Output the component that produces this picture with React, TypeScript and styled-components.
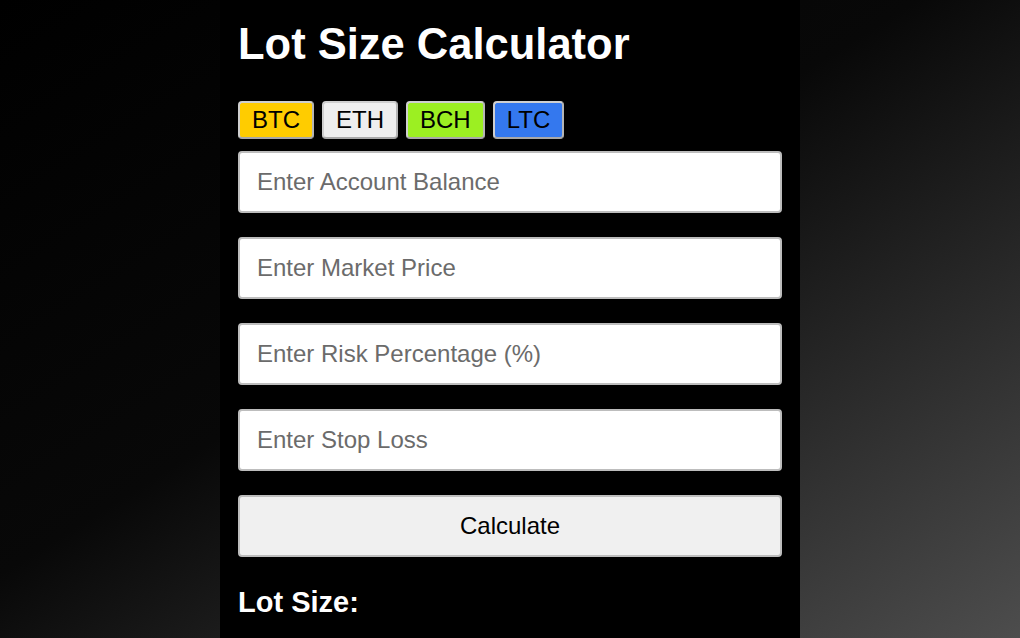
import React from 'react'
import styled, { createGlobalStyle } from 'styled-components'

const Global = createGlobalStyle`
  * {
    margin: 0;
    padding: 0;
    box-sizing: border-box;
  }

  html, body, #root {
    height: 100%;
  }

  body {
    font-family: 'Liberation Sans', Arial, sans-serif;
    background: linear-gradient(to bottom right, #000 0%, #080808 45%, #4d4d4d 100%);
    overflow: hidden;
  }
`

const Page = styled.div`
  display: flex;
  justify-content: center;
  height: 100%;
`

const Panel = styled.main`
  width: 580px;
  height: 100%;
  padding: 19px 18px 0;
  background: #000;
  display: flex;
  flex-direction: column;
`

const Title = styled.h1`
  font-size: 43.5px;
  font-weight: 700;
  line-height: 50px;
  color: #fff;
`

const Coins = styled.div`
  display: flex;
  gap: 8px;
  margin-top: 32px;
`

const Coin = styled.button<{ $bg: string }>`
  height: 38px;
  padding: 0 12px;
  font-family: inherit;
  font-size: 24px;
  color: #000;
  background: ${p => p.$bg};
  border: 2px solid #cfcfcf;
  border-bottom-color: #a8a8a8;
  border-right-color: #b5b5b5;
  border-radius: 4px;
`

const Fields = styled.div`
  display: flex;
  flex-direction: column;
  gap: 24px;
  margin-top: 12px;
`

const Field = styled.input`
  height: 62px;
  width: 100%;
  padding: 0 17px;
  font-family: inherit;
  font-size: 24px;
  color: #222;
  background: #fff;
  border: 2px solid #bdbdbd;
  border-radius: 4px;
  outline: none;

  &::placeholder {
    color: #6b6b6b;
  }
`

const Calculate = styled.button`
  height: 62px;
  width: 100%;
  font-family: inherit;
  font-size: 24px;
  color: #000;
  background: #f0f0f0;
  border: 2px solid #bdbdbd;
  border-radius: 4px;
`

const Result = styled.h2`
  margin-top: 28px;
  font-size: 29px;
  font-weight: 700;
  line-height: 34px;
  color: #fff;
`

const coins = [
  { name: 'BTC', bg: '#ffcc00' },
  { name: 'ETH', bg: '#eeeeee' },
  { name: 'BCH', bg: '#9cef22' },
  { name: 'LTC', bg: '#3478ee' },
]

const fields = [
  'Enter Account Balance',
  'Enter Market Price',
  'Enter Risk Percentage (%)',
  'Enter Stop Loss',
]

export default function App() {
  return (
    <>
      <Global />
      <Page>
        <Panel>
          <Title>Lot Size Calculator</Title>
          <Coins>
            {coins.map(c => (
              <Coin key={c.name} $bg={c.bg}>
                {c.name}
              </Coin>
            ))}
          </Coins>
          <Fields>
            {fields.map(f => (
              <Field key={f} type="text" placeholder={f} />
            ))}
            <Calculate>Calculate</Calculate>
          </Fields>
          <Result>Lot Size:</Result>
        </Panel>
      </Page>
    </>
  )
}
